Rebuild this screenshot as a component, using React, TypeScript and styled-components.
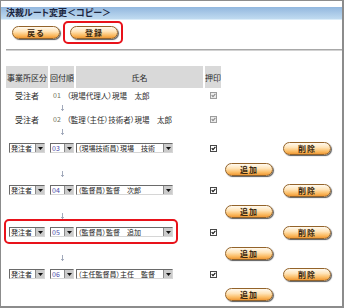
import styled, { createGlobalStyle } from 'styled-components';

const GlobalStyle = createGlobalStyle`
  html, body { margin: 0; padding: 0; background: #fff; }
  body {
    font-family: "Noto Sans CJK JP", "Noto Sans", sans-serif;
    font-feature-settings: "palt";
  }
`;

/* ─── Data ──────────────────────────────────── */

const FIXED_ROWS = [
  { office: '受注者', no: '01', name: '（現場代理人）現場　太郎' },
  { office: '受注者', no: '02', name: '（監理（主任）技術者）現場　太郎' },
];

const EDIT_ROWS = [
  { no: '03', name: '（現場技術員）現場　技術', highlight: false },
  { no: '04', name: '（監督員）監督　次郎', highlight: false },
  { no: '05', name: '（監督員）監督　追加', highlight: true },
  { no: '06', name: '（主任監督員）主任　監督', highlight: false },
];

const COLS = '42px 24px 127px 16px 52px 60px';

/* ─── Styled components ─────────────────────── */

const Frame = styled.div`
  box-sizing: border-box;
  width: 344px;
  height: 308px;
  border: 1px solid #8c8c8c;
  border-right-width: 2px;
  border-bottom-width: 2px;
  padding-top: 6px;
  overflow: hidden;
  color: #2a2a2a;
`;

const TitleBar = styled.div`
  height: 12px;
  padding-left: 5px;
  background: linear-gradient(#92b7de, #c0dbf0);
  border-bottom: 1px solid #dcedf9;
  font-size: 9px;
  line-height: 12px;
  font-weight: bold;
  color: #1c2640;
  white-space: nowrap;
`;

const ActionBar = styled.div`
  display: flex;
  align-items: center;
  gap: 3px;
  height: 24px;
  padding-left: 11px;
`;

const RedFrame = styled.div`
  display: flex;
  padding: 3px 3px 3px 5px;
  border: 2px solid #e8121a;
  border-radius: 5px;
`;

const PillButton = styled.button`
  box-sizing: border-box;
  display: flex;
  align-items: center;
  justify-content: center;
  width: 48px;
  height: 13px;
  margin: 0;
  padding: 0;
  border: 1px solid #93632a;
  border-radius: 7px;
  background: linear-gradient(#fffaf0 0%, #ffe4b8 40%, #fbbd66 75%, #f09a36 100%);
  box-shadow: 1px 1px 1px #5c5c5c;
  font-family: inherit;
  font-size: 8px;
  font-weight: bold;
  color: #3a2810;
  letter-spacing: 1px;
  cursor: pointer;
`;

const Divider = styled.div`
  margin: 5px 0 0 5px;
  height: 0;
  border-top: 1px solid #a8a8a8;
  border-bottom: 1px solid #d2d2d2;
`;

const Table = styled.div`
  margin: 15px 0 0 5px;
`;

const Row = styled.div<{ $h: number }>`
  position: relative;
  display: grid;
  grid-template-columns: ${COLS};
  column-gap: 2px;
  align-items: center;
  height: ${({ $h }) => $h}px;
`;

const HeadCell = styled.div`
  display: flex;
  align-items: center;
  justify-content: center;
  height: 100%;
  background: #d9d9d9;
  font-size: 8px;
  color: #2a2a2a;
  white-space: nowrap;
`;

const Center = styled.div`
  display: flex;
  justify-content: center;
  align-items: center;
  font-size: 8px;
`;

const FixedNo = styled.div`
  grid-column: 2 / 4;
  display: flex;
  align-items: center;
  padding-left: 3px;
  white-space: nowrap;
`;

const NoText = styled.span`
  width: 14px;
  font-size: 7px;
  color: #707058;
`;

const Name = styled.span`
  font-size: 7.5px;
`;

const SelectBox = styled.div<{ $w: number }>`
  box-sizing: border-box;
  display: flex;
  align-items: stretch;
  width: ${({ $w }) => $w}px;
  height: 10px;
  border: 1px solid;
  border-color: #6a6a6a #d6d6d6 #d6d6d6 #6a6a6a;
  background: #fff;
`;

const SelectText = styled.span<{ $num?: boolean }>`
  flex: 1;
  min-width: 0;
  padding-left: 1px;
  overflow: hidden;
  white-space: nowrap;
  font-size: 7px;
  line-height: 8px;
  color: ${({ $num }) => ($num ? '#4a4aa8' : '#222')};
`;

const SelectArrow = styled.span`
  display: flex;
  align-items: center;
  justify-content: center;
  flex-shrink: 0;
  width: 8px;
  background: #cbcbcb;
  border-left: 1px solid #8a8a8a;
`;

const CheckBox = styled.span<{ $disabled?: boolean }>`
  box-sizing: border-box;
  display: flex;
  justify-self: center;
  width: 7px;
  height: 7px;
  border: 1px solid ${({ $disabled }) => ($disabled ? '#9c9c9c' : '#474747')};
  background: ${({ $disabled }) => ($disabled ? '#ececec' : '#fff')};
`;

const DownArrow = styled.div`
  grid-column: 2;
  display: flex;
  justify-content: center;
  align-self: end;
  padding-bottom: 2px;
`;

const ButtonCell = styled.div<{ $col: number }>`
  grid-column: ${({ $col }) => $col};
  display: flex;
  justify-content: center;
`;

const RowMark = styled.div`
  position: absolute;
  box-sizing: border-box;
  left: -2px;
  top: -2px;
  width: 174px;
  height: 25px;
  border: 2px solid #e8121a;
  border-radius: 5px;
  pointer-events: none;
`;

/* ─── Small parts ───────────────────────────── */

function Select({ w, text, num }: { w: number; text: string; num?: boolean }) {
  return (
    <SelectBox $w={w}>
      <SelectText $num={num}>{text}</SelectText>
      <SelectArrow>
        <svg width="5" height="3" viewBox="0 0 5 3">
          <path d="M0 0 L5 0 L2.5 3 Z" fill="#111" />
        </svg>
      </SelectArrow>
    </SelectBox>
  );
}

function Check({ disabled }: { disabled?: boolean }) {
  return (
    <CheckBox $disabled={disabled}>
      <svg width="5" height="5" viewBox="0 0 5 5">
        <path d="M0.7 2.2 L2 3.6 L4.4 0.9" fill="none" stroke={disabled ? '#8a8a8a' : '#111'} strokeWidth="1.1" />
      </svg>
    </CheckBox>
  );
}

function Arrow() {
  return (
    <DownArrow>
      <svg width="3" height="6" viewBox="0 0 3 6">
        <path d="M1.5 0 V5.5 M0.2 4 L1.5 5.6 L2.8 4" fill="none" stroke="#8a94aa" strokeWidth="0.8" />
      </svg>
    </DownArrow>
  );
}

/* ─── Page ──────────────────────────────────── */

export default function App() {
  return (
    <>
      <GlobalStyle />
      <Frame>
        <TitleBar>決裁ルート変更＜コピー＞</TitleBar>
        <ActionBar>
          <PillButton>戻る</PillButton>
          <RedFrame>
            <PillButton>登録</PillButton>
          </RedFrame>
        </ActionBar>
        <Divider />

        <Table>
          <Row $h={22}>
            <HeadCell>事業所区分</HeadCell>
            <HeadCell>回付順</HeadCell>
            <HeadCell>氏名</HeadCell>
            <HeadCell>押印</HeadCell>
          </Row>

          {FIXED_ROWS.map((r) => (
            <div key={r.no}>
              <Row $h={12} style={r.no === '01' ? { marginTop: 1 } : undefined}>
                <Center>{r.office}</Center>
                <FixedNo>
                  <NoText>{r.no}</NoText>
                  <Name>{r.name}</Name>
                </FixedNo>
                <Check disabled />
              </Row>
              <Row $h={12}>
                <Arrow />
              </Row>
            </div>
          ))}

          {EDIT_ROWS.map((r, i) => (
            <div key={r.no}>
              <Row $h={22}>
                <Center>
                  <Select w={36} text="発注者" />
                </Center>
                <Center>
                  <Select w={24} text={r.no} num />
                </Center>
                <div>
                  <Select w={97} text={r.name} />
                </div>
                <Check />
                <div />
                <ButtonCell $col={6}>
                  <PillButton>削除</PillButton>
                </ButtonCell>
                {r.highlight && <RowMark />}
              </Row>
              <Row $h={i === EDIT_ROWS.length - 1 ? 19 : 20}>
                {i < EDIT_ROWS.length - 1 && <Arrow />}
                <ButtonCell $col={5}>
                  <PillButton>追加</PillButton>
                </ButtonCell>
              </Row>
            </div>
          ))}
        </Table>
      </Frame>
    </>
  );
}
